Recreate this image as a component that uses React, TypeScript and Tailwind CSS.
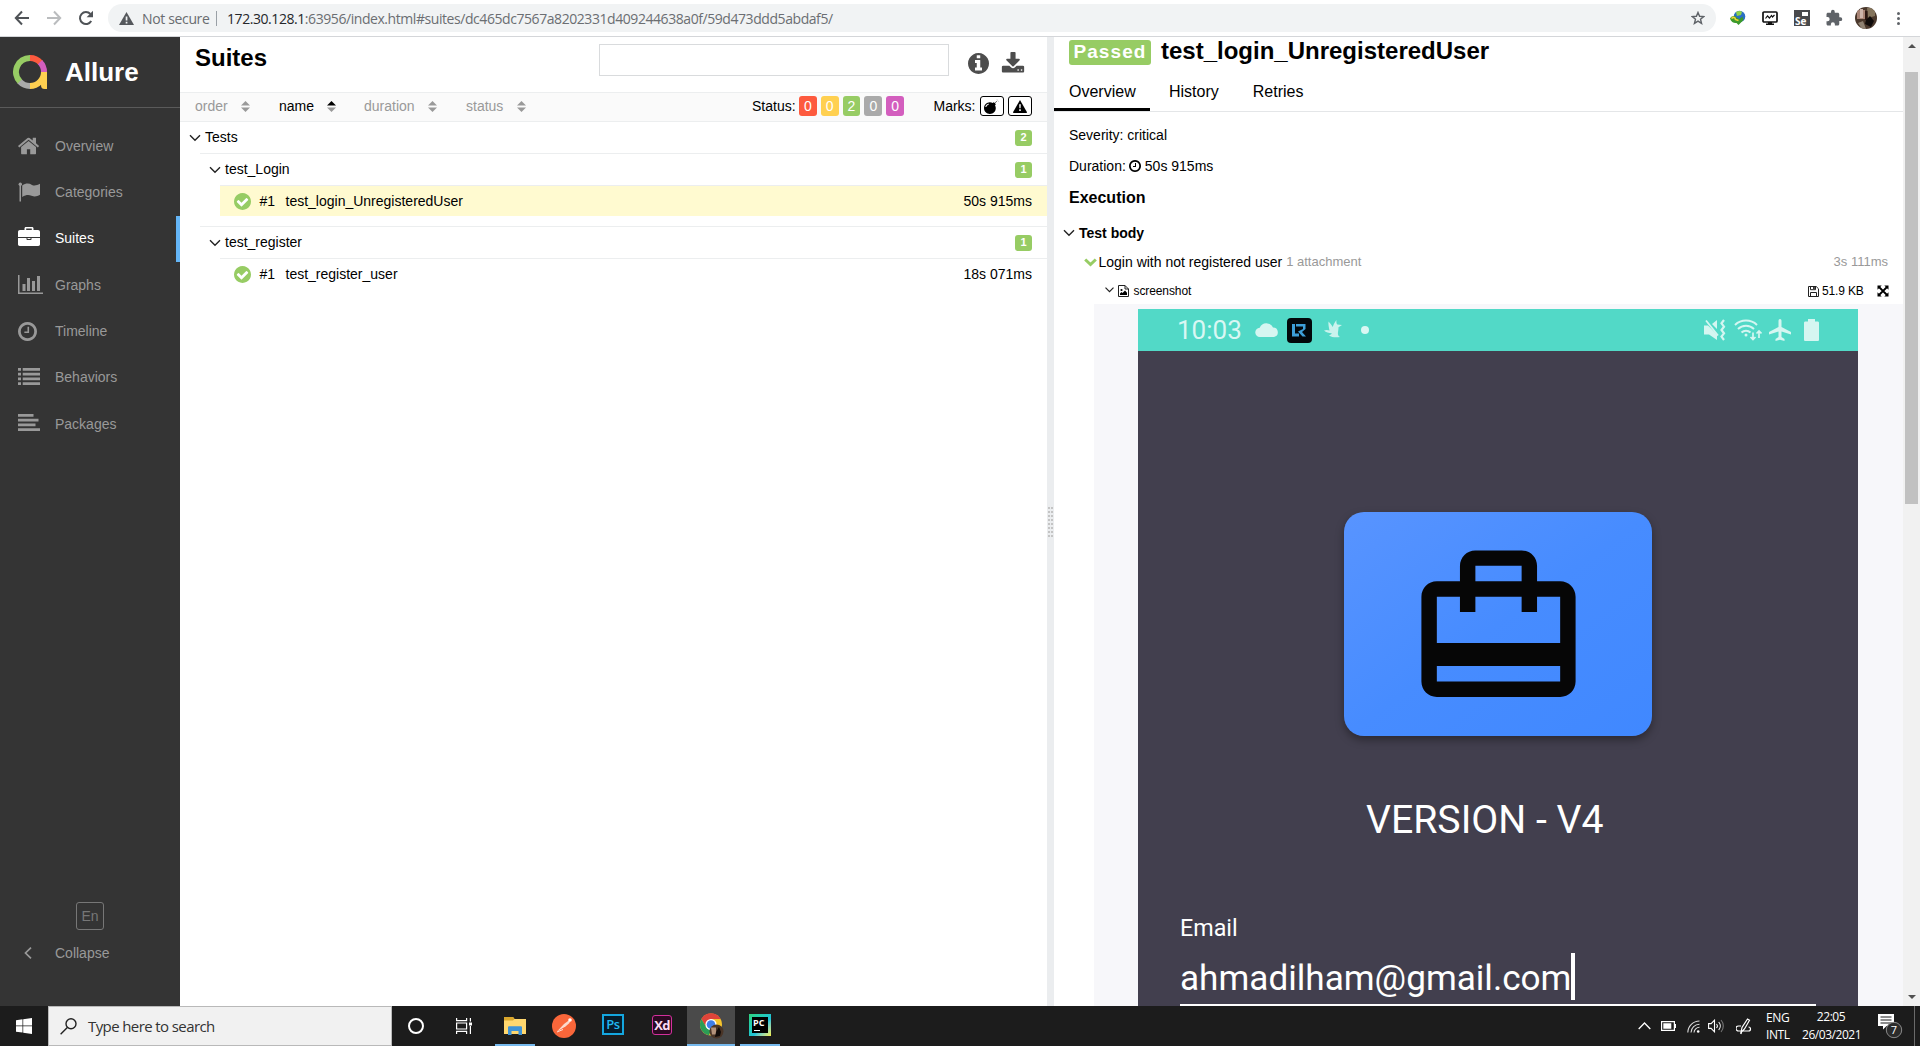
import type { ReactNode } from "react";

const RING =
  "M1664 896q0 209-103 385.5t-279.5 279.5-385.5 103-385.5-103-279.5-279.5-103-385.5 103-385.5 279.5-279.5 385.5-103 385.5 103 279.5 279.5 103 385.5z";
const HOME =
  "M1472 992v480q0 26-19 45t-45 19h-384v-384h-256v384h-384q-26 0-45-19t-19-45v-480q0-1 .5-3t.5-3l575-474 575 474q1 2 1 6zm223-69l-62 74q-8 9-21 11h-3q-13 0-21-7l-692-577-692 577q-12 8-24 7-13-2-21-11l-62-74q-8-10-7-23.5t11-21.5l719-599q32-26 76-26t76 26l244 204v-195q0-14 9-23t23-9h192q14 0 23 9t9 23v408l219 182q10 8 11 21.5t-7 23.5z";
const CHECK =
  "M1412 734q0-28-18-46l-91-90q-19-19-45-19t-45 19l-408 407-226-226q-19-19-45-19t-45 19l-91 90q-18 18-18 46 0 27 18 45l362 362q19 19 45 19 27 0 46-19l543-543q18-18 18-45z";
const CLOCK =
  "M1024 544v448q0 14-9 23t-23 9h-320q-14 0-23-9t-9-23v-64q0-14 9-23t23-9h224v-352q0-14 9-23t23-9h64q14 0 23 9t9 23zm416 352q0-148-73-273t-198-198-273-73-273 73-198 198-73 273 73 273 198 198 273 73 273-73 198-198 73-273zm224 0q0 209-103 385.5t-279.5 279.5-385.5 103-385.5-103-279.5-279.5-103-385.5 103-385.5 279.5-279.5 385.5-103 385.5 103 279.5 279.5 103 385.5z";
const INFO =
  "M1152 1376v-160q0-14-9-23t-23-9h-96v-512q0-14-9-23t-23-9h-320q-14 0-23 9t-9 23v160q0 14 9 23t23 9h96v320h-96q-14 0-23 9t-9 23v160q0 14 9 23t23 9h448q14 0 23-9t9-23zm-128-896v-160q0-14-9-23t-23-9h-192q-14 0-23 9t-9 23v160q0 14 9 23t23 9h192q14 0 23-9t9-23zm640 416q0 209-103 385.5t-279.5 279.5-385.5 103-385.5-103-279.5-279.5-103-385.5 103-385.5 279.5-279.5 385.5-103 385.5 103 279.5 279.5 103 385.5z";
const DOWNLOAD =
  "M1344 1344q0-26-19-45t-45-19-45 19-19 45 19 45 45 19 45-19 19-45zm256 0q0-26-19-45t-45-19-45 19-19 45 19 45 45 19 45-19 19-45zm128-224v320q0 40-28 68t-68 28h-1472q-40 0-68-28t-28-68v-320q0-40 28-68t68-28h465l135 136q58 56 136 56t136-56l136-136h464q40 0 68 28t28 68zm-325-569q17 41-14 70l-448 448q-18 19-45 19t-45-19l-448-448q-31-29-14-70 17-39 59-39h256v-448q0-26 19-45t45-19h256q26 0 45 19t19 45v448h256q42 0 59 39z";
const BOMB =
  "M571 589q-10-25-34-35t-49 0q-108 44-191 127t-127 191q-10 25 0 49t35 34q13 5 24 5 42 0 60-40 34-84 98.5-148.5t148.5-98.5q25-11 35-35t0-49zm942-356l46 46-244 243 68 68q19 19 19 45.5t-19 45.5l-64 64q89 161 89 343 0 143-55.5 273.5t-150 225-225 150-273.5 55.5-273.5-55.5-225-150-150-225-55.5-273.5 55.5-273.5 150-225 225-150 273.5-55.5q182 0 343 89l64-64q19-19 45.5-19t45.5 19l68 68z";
const CARD_TRAVEL =
  "M20 6h-3V4c0-1.11-.89-2-2-2H9c-1.11 0-2 .89-2 2v2H4c-1.11 0-2 .89-2 2v11c0 1.11.89 2 2 2h16c1.11 0 2-.89 2-2V8c0-1.11-.89-2-2-2zM9 4h6v2H9V4zm11 15H4v-2h16v2zm0-5H4V8h3v2h2V8h6v2h2V8h3v6z";

/* ---------- shared pieces ---------- */

function Chevron({ className = "" }: { className?: string }) {
  return (
    <svg className={className} width="12" height="8" viewBox="0 0 12 8" fill="none" stroke="#222" strokeWidth="1.4">
      <path d="M1 1.2l5 5 5-5" />
    </svg>
  );
}

/* ---------- browser toolbar ---------- */

function BrowserBar() {
  return (
    <header className="flex h-[37px] shrink-0 items-center border-b border-[#d4d6d9] bg-white">
      <svg className="ml-[14px] shrink-0" width="16" height="16" viewBox="0 0 16 16" fill="none" stroke="#4f5357" strokeWidth="2">
        <path d="M15 8H2M8 1.5L1.8 8 8 14.5" />
      </svg>
      <svg className="ml-[16px] shrink-0" width="16" height="16" viewBox="0 0 16 16" fill="none" stroke="#babcbe" strokeWidth="2">
        <path d="M1 8h13M8 1.5L14.2 8 8 14.5" />
      </svg>
      <svg className="ml-[16px] shrink-0" width="16" height="16" viewBox="0 0 16 16">
        <path d="M13.2 11a6 6 0 1 1-.8-7" fill="none" stroke="#4f5357" strokeWidth="2" />
        <path d="M15 .8v6.4H8.6z" fill="#4f5357" />
      </svg>
      <div className="ml-[14px] flex h-7 w-[1608px] shrink-0 items-center rounded-full bg-[#f1f3f4] font-['Open_Sans',sans-serif] text-[14px]">
        <svg className="ml-[11px] shrink-0" width="15" height="13" viewBox="0 0 15 13">
          <path d="M7.5 0L15 13H0z" fill="#55585c" />
          <path d="M6.7 4.5h1.7v4H6.7zM6.7 9.7h1.7v1.7H6.7z" fill="#f1f3f4" />
        </svg>
        <span className="ml-[8px] w-[74px] whitespace-nowrap tracking-[-0.35px] text-[#696c70]">Not secure</span>
        <span className="h-[15px] w-px bg-[#9aa0a6]" />
        <span className="ml-[10px] grow whitespace-nowrap tracking-[-0.435px] text-[#6b6e72]">
          <span className="text-[#25272a]">172.30.128.1</span>
          :63956/index.html#suites/dc465dc7567a8202331d409244638a0f/59d473ddd5abdaf5/
        </span>
        <svg className="mr-[11px]" width="14" height="14" viewBox="0 0 24 24" fill="none" stroke="#5f6368" strokeWidth="2.4">
          <path d="M12 2.5l2.7 6.6 7.1.5-5.5 4.6 1.8 7L12 17.3l-6.1 3.9 1.8-7L2.200 9.600l7.100-.5z" />
        </svg>
      </div>
      <svg className="ml-[14px] shrink-0" width="16" height="16" viewBox="0 0 16 16">
        <circle cx="9.500" cy="6.500" r="5.800" fill="#2a6fc4" />
        <path d="M6 2c2-1.500 5-1.500 6 0l-1 3-4 1z" fill="#8fd14a" />
        <path d="M0 8.500c2-3 5-3 6.500-1l3 1.500 3-2.500 1 3.500-5 5-2-2C4 13.500 1 12 0 8.500z" fill="#3d9a2b" />
        <path d="M1.500 8.500c2-2 4-1 4 1l3 1" stroke="#f1d33a" strokeWidth="1.600" fill="none" />
      </svg>
      <svg className="ml-[16px] shrink-0" width="16" height="16" viewBox="0 0 16 16">
        <rect x="1" y="2" width="14" height="10" rx="1" fill="#fff" stroke="#111" strokeWidth="1.700" />
        <path d="M3.500 8.500l2-2.500 2 2 2-2.500 1 1.500 2-2" fill="none" stroke="#111" strokeWidth="1.200" />
        <path d="M6 12h4v1.500h2v1.500H4v-1.500h2z" fill="#111" />
      </svg>
      <div className="relative ml-[16px] h-4 w-4 shrink-0 bg-[#48494c]">
        <span className="absolute top-[5px] left-[1px] font-['Open_Sans',sans-serif] text-[10px] leading-[12px] font-bold text-white">Se</span>
        <span className="absolute top-[2px] right-[2px] h-[4px] w-[6px] bg-white" />
      </div>
      <svg className="ml-[15px] shrink-0" width="18" height="18" viewBox="0 0 24 24" fill="#5f6368">
        <path d="M20.500 11H19V7c0-1.100-.9-2-2-2h-4V3.500a2.500 2.500 0 0 0-5 0V5H4c-1.100 0-2 .9-2 2v3.800h1.500a2.700 2.700 0 0 1 0 5.400H2V20c0 1.100.9 2 2 2h3.800v-1.500a2.700 2.700 0 0 1 5.400 0V22H17c1.100 0 2-.9 2-2v-4h1.500a2.500 2.500 0 0 0 0-5z" />
      </svg>
      <svg className="ml-[12px] shrink-0" width="22" height="22" viewBox="0 0 22 22">
        <defs>
          <clipPath id="avatar">
            <circle cx="11" cy="11" r="11" />
          </clipPath>
        </defs>
        <g clipPath="url(#avatar)">
          <rect width="22" height="22" fill="#4a382c" />
          <path d="M2 3h8v9H2z" fill="#a88476" />
          <path d="M5 2h3v9H5z" fill="#cdb5ab" />
          <path d="M12 1h8v8l-7 2z" fill="#84745c" />
          <path d="M10 4h2.500v9H10z" fill="#2b1712" />
          <path d="M3 16l5-2 3 8H7z" fill="#8f8272" />
          <path d="M11 13l4-4 4 5-3 6-6-3z" fill="#0f0b0a" />
        </g>
      </svg>
      <div className="ml-[20px] flex flex-col gap-[2px]">
        <span className="h-[3px] w-[3px] rounded-full bg-[#5f6368]" />
        <span className="h-[3px] w-[3px] rounded-full bg-[#5f6368]" />
        <span className="h-[3px] w-[3px] rounded-full bg-[#5f6368]" />
      </div>
    </header>
  );
}

/* ---------- Allure sidebar ---------- */

const NAV: { label: string; active?: boolean; icon: ReactNode }[] = [
  {
    label: "Overview",
    icon: (
      <svg width="22" height="22" viewBox="80 50 1700 1700" fill="currentColor">
        <path d={HOME} />
      </svg>
    ),
  },
  {
    label: "Categories",
    icon: (
      <svg width="24" height="20" viewBox="0 0 24 20" fill="currentColor">
        <circle cx="2.300" cy="2.200" r="1.700" />
        <path d="M1.500 3h1.500v16.500H1.500zM4.200 3.400C8 1 11 1.200 14 2.900c2.500 1.200 5 .3 8-1.100v11c-3 1.800-5.500 2.300-8.500 1-3-1.200-5.500-1-9.300 1.200z" />
      </svg>
    ),
  },
  {
    label: "Suites",
    active: true,
    icon: (
      <svg className="-mt-1" width="22" height="20" viewBox="0 0 22 20" fill="currentColor">
        <path
          fillRule="evenodd"
          d="M6.500 3V1.500C6.500.6 7 0 8 0h6c1 0 1.500.6 1.500 1.500V3H20c1.200 0 2 .8 2 2v5H0V5c0-1.200.8-2 2-2zM8.200 1.500V3h5.600V1.500zM0 11h8.500v1.300c0 .5.300.7.700.7h3.600c.4 0 .7-.2.7-.7V11H22v6.300c0 1-.8 1.700-1.700 1.700H1.700C.8 19 0 18.300 0 17.300z"
        />
        <path d="M9.500 11h3v1h-3z" />
      </svg>
    ),
  },
  {
    label: "Graphs",
    icon: (
      <svg className="-mt-0.5" width="25" height="19" viewBox="0 0 25 19" fill="currentColor">
        <path d="M0 0h1.500v17.500H25V19H0zM4.500 9h3v7h-3zM9 3h3v13H9zM14 6h3v10h-3zM19 1h3v15h-3z" />
      </svg>
    ),
  },
  {
    label: "Timeline",
    icon: (
      <svg width="19" height="19" viewBox="128 128 1536 1536" fill="currentColor">
        <path d={CLOCK} />
      </svg>
    ),
  },
  {
    label: "Behaviors",
    icon: (
      <svg className="-mt-0.5" width="22" height="17" viewBox="0 0 22 17" fill="currentColor">
        <path d="M0 0h3v2.700H0zM0 4.700h3v2.700H0zM0 9.500h3v2.700H0zM0 14.200h3V17H0zM4.700 0H22v2.700H4.700zM4.700 4.700H22v2.700H4.700zM4.700 9.500H22v2.700H4.700zM4.700 14.200H22V17H4.700z" />
      </svg>
    ),
  },
  {
    label: "Packages",
    icon: (
      <svg className="-mt-[3px]" width="22" height="17" viewBox="0 0 22 17" fill="currentColor">
        <path d="M0 0h15.500v2.700H0zM0 4.700h20.500v2.700H0zM0 9.500h17.500v2.700H0zM0 14.200h22V17H0z" />
      </svg>
    ),
  },
];

function Sidebar() {
  return (
    <aside className="flex w-[180px] shrink-0 flex-col bg-[#343434] text-[14px] text-[#999]">
      <div className="flex h-[71px] shrink-0 items-center border-b border-[#5a5a5a] pl-[13px]">
        <svg width="35" height="35" viewBox="0 0 35 35" fill="none" strokeWidth="6">
          <path d="M7.100 26.900A14 14 0 0 1 17 3" stroke="#97cc64" />
          <path d="M17 3a14 14 0 0 1 10.500 4.700" stroke="#fd5a3e" />
          <path d="M27 7.200a14 14 0 0 1 4 9.800" stroke="#d35ebe" />
          <path d="M17 31a14 14 0 0 1-10.300-4.500" stroke="#aaa" />
          <path d="M17 31a14 14 0 0 0 14-14" stroke="#ffd050" />
          <path d="M28 17h6v17h-2.500c-2.500 0-3.500-1.500-3.500-4z" fill="#ffd050" />
        </svg>
        <span className="ml-[17px] text-[26px] leading-[30px] font-bold text-white">Allure</span>
      </div>
      <nav className="mt-[15px] flex flex-col">
        {NAV.map((n) => (
          <div
            key={n.label}
            className={
              n.active
                ? "flex h-[46.33px] items-center border-r-4 border-[#64b5f6] pl-[18px] text-white"
                : "flex h-[46.33px] items-center pl-[18px]"
            }
          >
            <span className="flex w-[37px] shrink-0 items-center">{n.icon}</span>
            {n.label}
          </div>
        ))}
      </nav>
      <div className="mt-auto mb-[8px] ml-[76px] flex h-7 w-7 items-center justify-center rounded-[3px] border border-[#777] text-[#777]">
        En
      </div>
      <div className="mb-[38px] flex h-[30px] items-center pl-6">
        <svg width="8" height="12" viewBox="0 0 8 12" fill="none" stroke="#999" strokeWidth="1.700">
          <path d="M7 .7L1.500 6 7 11.300" />
        </svg>
        <span className="ml-[23px]">Collapse</span>
      </div>
    </aside>
  );
}

/* ---------- suites tree ---------- */

function Sorter({ label, active, className }: { label: string; active?: boolean; className: string }) {
  return (
    <div className={className}>
      <span className={active ? "text-black" : "text-[#999]"}>{label}</span>
      <svg width="9" height="11" viewBox="0 0 9 11">
        <path d="M0 4.500L4.500 0 9 4.500z" fill={active ? "#000" : "#999"} />
        <path d="M0 6.500h9L4.500 11z" fill="#999" />
      </svg>
    </div>
  );
}

function Count({ n }: { n: number }) {
  return (
    <span className="mr-[15px] ml-auto flex h-4 w-[17px] items-center justify-center rounded-[3px] bg-[#97cc64] text-[11px] font-bold text-white">
      {n}
    </span>
  );
}

function Leaf({ name, time, selected }: { name: string; time: string; selected?: boolean }) {
  return (
    <div
      className={
        selected
          ? "ml-10 flex h-[30px] items-center bg-[#fffad0] pl-[13.500px]"
          : "ml-10 flex h-[30px] items-center pl-[13.500px]"
      }
    >
      <svg width="17" height="17" viewBox="128 128 1536 1536">
        <path d={RING} fill="#97cc64" />
        <path d={CHECK} fill="#fff" />
      </svg>
      <span className="ml-[9px] w-[26px]">#1</span>
      <span>{name}</span>
      <span className="mr-[15px] ml-auto">{time}</span>
    </div>
  );
}

function Suites() {
  const statuses = ["bg-[#fd5a3e]", "bg-[#ffd050]", "bg-[#97cc64]", "bg-[#aaa]", "bg-[#d35ebe]"];
  return (
    <section className="flex w-[867px] shrink-0 flex-col bg-white text-[14px]">
      <div className="flex h-[55px] shrink-0 pl-[15px]">
        <h2 className="mt-[6px] w-[404px] text-[24px] leading-[30px] font-bold">Suites</h2>
        <div className="mt-[7px] h-8 w-[350px] border border-[#d9dbdd]" />
        <svg className="mt-[16px] ml-[19px]" width="21" height="21" viewBox="128 128 1536 1536" fill="#4d4d4d">
          <path d={INFO} />
        </svg>
        <svg className="mt-[15px] ml-[12px]" width="24" height="24" viewBox="0 0 1792 1792" fill="#4d4d4d">
          <path d={DOWNLOAD} />
        </svg>
      </div>
      <div className="flex h-[30px] shrink-0 items-center border-y border-[#eceeef] bg-[#fafafa] pb-[2px] pl-[15px]">
        <Sorter label="order" className="flex w-[55px] items-center justify-between" />
        <Sorter label="name" active className="ml-[29px] flex w-[57px] items-center justify-between" />
        <Sorter label="duration" className="ml-[28px] flex w-[73px] items-center justify-between" />
        <Sorter label="status" className="ml-[29px] flex w-[60px] items-center justify-between" />
        <span className="ml-[226px] w-[47px]">Status:</span>
        <div className="flex gap-[4px]">
          {statuses.map((s, i) => (
            <span key={s} className={"flex h-5 w-[17.800px] items-center justify-center rounded-[3px] text-white " + s}>
              {i === 2 ? 2 : 0}
            </span>
          ))}
        </div>
        <span className="ml-[29.500px] w-[46.500px]">Marks:</span>
        <span className="flex h-5 w-6 items-center justify-center rounded-[3px] border border-black bg-white">
          <svg width="15" height="15" viewBox="0 0 1792 1792">
            <path d={BOMB} />
            <path d="M1560 130l60 60M1700 280h80M1560 20v60" fill="none" stroke="#888" strokeWidth="70" />
          </svg>
        </span>
        <span className="ml-1 flex h-5 w-6 items-center justify-center rounded-[3px] border border-black bg-white">
          <svg width="14" height="13" viewBox="0 0 14 13">
            <path d="M7 0l7 12.300q0 .7-.7.700H.7q-.7 0-.7-.7z" />
            <path d="M6.200 4.300h1.600l-.2 4H6.400zM6.200 9.300h1.600v1.600H6.200z" fill="#fff" />
          </svg>
        </span>
      </div>
      <div className="flex h-[31px] items-center pl-[9px]">
        <Chevron />
        <span className="ml-[4px]">Tests</span>
        <Count n={2} />
      </div>
      <div className="ml-5 flex h-8 items-center border-t border-[#eceeef] pl-[9px]">
        <Chevron />
        <span className="ml-[4px]">test_Login</span>
        <Count n={1} />
      </div>
      <div className="ml-10 h-px bg-[#eceeef]" />
      <Leaf name="test_login_UnregisteredUser" time="50s 915ms" selected />
      <div className="mt-[10px] ml-5 flex h-8 items-center border-t border-[#eceeef] pl-[9px]">
        <Chevron />
        <span className="ml-[4px]">test_register</span>
        <Count n={1} />
      </div>
      <div className="ml-10 h-px bg-[#eceeef]" />
      <Leaf name="test_register_user" time="18s 071ms" />
    </section>
  );
}

function Gutter() {
  return (
    <div className="flex w-[7px] shrink-0 flex-col items-center bg-[#ebedef] pt-[470px]">
      <div className="grid grid-cols-2 gap-x-[1px] gap-y-[2px]">
        {Array.from({ length: 16 }, (_, i) => (
          <span key={i} className="h-[2px] w-[2px] bg-[#c4c4c4]" />
        ))}
      </div>
    </div>
  );
}

/* ---------- attached phone screenshot ---------- */

function PhoneStatusBar() {
  return (
    <div className="flex h-[42px] shrink-0 items-center bg-[#52d9c7] pl-[39px]">
      <span className="w-[78px] text-[26px] leading-[30px] text-[#d9f7f3]">10:03</span>
      <svg width="24" height="14" viewBox="0 0 24 14" fill="#d5f6f1">
        <path d="M5 14a4.600 4.600 0 0 1-.3-9.200A7.300 7.300 0 0 1 18 4.500 4.800 4.800 0 0 1 19 14z" />
      </svg>
      <svg className="ml-2" width="25" height="25" viewBox="0 0 25 25">
        <rect width="25" height="25" rx="4" fill="#02080b" />
        <path d="M5 6h3v9.500h4V18.500H5z" fill="#3d9fd8" />
        <path d="M9 6h9.500v5l-3.500 3 4 4.500h-3.500L11 13.500l5-2.500V8.500H9z" fill="#3d9fd8" />
      </svg>
      <svg className="-mt-[3px] ml-[12px]" width="18" height="18" viewBox="0 0 18 18" fill="#c9f3ed">
        <path d="M0 10.500c2-.8 4-.6 5.500 0C5 8 4 4 4.500 1.500 6 3 7.500 4.800 8.800 7 9.500 4.500 11 1.500 12.500 0c-.3 2 0 3.500.8 4.500L18 5l-3.500 2.200C14.500 12 12.500 15 16 17c-4 .8-8.500.3-11-1.500 1.500-.5 2.300-1.200 2.800-2.200C4.500 13.200 2 12.300 0 10.500z" />
      </svg>
      <span className="ml-[19px] h-2 w-2 rounded-full bg-[#d9f7f3]" />
      <svg className="ml-auto" width="22" height="22" viewBox="0 0 22 22">
        <path d="M0 6.500h4l9 9V21l-8-5.500H0zM8 5l5-4v9z" fill="#d5f6f1" />
        <path d="M2 1.500l12 15" stroke="#d5f6f1" strokeWidth="1.800" />
        <path d="M20 1l-2.500 3.300L20 7.700l-2.500 3.300 2.500 3.300-2.500 3.300L20 21" fill="none" stroke="#d5f6f1" strokeWidth="2.200" />
      </svg>
      <svg className="ml-[8px]" width="28" height="22" viewBox="0 0 28 22" fill="none" stroke="#d5f6f1" strokeWidth="2">
        <path d="M1 6a16 16 0 0 1 22 0M4 10a11.500 11.500 0 0 1 16 0M7.500 13.500a6.500 6.500 0 0 1 9 0" />
        <circle cx="12" cy="16" r="1.500" fill="#d5f6f1" stroke="none" />
        <path d="M19 13.500v7M16.500 18l2.500 2.500 2.500-2.500M25 19v-7M22.500 14.500L25 12l2.500 2.500" strokeWidth="1.700" />
      </svg>
      <svg className="ml-[7px]" width="22" height="22" viewBox="0 0 22 22" fill="#d5f6f1">
        <path d="M11 0c1 0 1.500.8 1.500 2v6l9.500 5v2.500l-9.500-3v5.500l3 2V22L11 20.700 6.500 22v-2l3-2v-5.500L0 15.500V13l9.500-5V2c0-1.200.5-2 1.500-2z" />
      </svg>
      <svg className="mr-[39px] ml-[13px]" width="15" height="22" viewBox="0 0 15 22" fill="#d5f6f1">
        <path d="M4 0h7v2.500h2.500c1 0 1.500.5 1.500 1.500v16.500c0 1-.5 1.500-1.500 1.500h-12C.5 22 0 21.500 0 20.500V4c0-1 .5-1.500 1.500-1.500H4z" />
      </svg>
    </div>
  );
}

function Phone() {
  return (
    <div className="ml-[44px] flex h-[697px] w-[720px] flex-col bg-[#423f4e] font-['Roboto',sans-serif] text-white">
      <PhoneStatusBar />
      <div className="mt-[161px] ml-[206px] h-[224px] w-[308px] shrink-0 rounded-[20px] bg-linear-to-br from-[#5894ff] via-[#478cff] to-[#4088ff] pt-[23px] pl-[61.500px] shadow-[0_4px_8px_rgba(0,0,0,0.35)]">
        <svg width="185" height="185" viewBox="0 0 24 24" fill="#060606">
          <path d={CARD_TRAVEL} />
        </svg>
      </div>
      <div className="mt-[59px] ml-[228px] h-[50px] text-[39.200px] leading-[50px] whitespace-nowrap">VERSION - V4</div>
      <div className="mt-[68px] ml-[42px] h-[30px] text-[23.300px] leading-[30px]">Email</div>
      <div className="mt-[10px] ml-[42px] flex h-[47px] items-center">
        <span className="w-[391px] pt-[3px] text-[35.150px] leading-[44px] whitespace-nowrap">ahmadilham@gmail.com</span>
        <span className="h-[47px] w-[4px] bg-white" />
      </div>
      <div className="mt-[4px] ml-[42px] h-[2px] w-[636px] bg-white" />
    </div>
  );
}

/* ---------- test result panel ---------- */

function Result() {
  return (
    <section className="flex min-w-0 grow flex-col overflow-hidden bg-white text-[14px]">
      <div className="mt-[3px] flex h-[25px] shrink-0 pl-[15px]">
        <span className="flex h-[25px] w-[82px] items-center justify-center rounded-[3px] bg-[#97cc64] text-[19px] font-bold tracking-[1.100px] text-white">
          Passed
        </span>
        <span className="ml-[10px] text-[24px] leading-[21px] font-bold whitespace-nowrap">test_login_UnregisteredUser</span>
      </div>
      <div className="flex h-[47px] shrink-0 border-b border-[#e4e6e8] text-[16px]">
        <span className="flex h-[46px] w-[96px] items-center border-b-[3px] border-black pt-[10px] pl-[15px]">Overview</span>
        <span className="ml-[19px] flex items-center pt-[7px]">History</span>
        <span className="ml-[34px] flex items-center pt-[7px]">Retries</span>
      </div>
      <div className="mt-[11px] h-[24px] shrink-0 pl-[15px] leading-[24px]">Severity: critical</div>
      <div className="mt-[7px] flex h-6 shrink-0 items-center pl-[15px]">
        Duration:
        <svg className="mr-[4px] ml-[3px]" width="12" height="12" viewBox="128 128 1536 1536">
          <path d={CLOCK} />
        </svg>
        50s 915ms
      </div>
      <h3 className="mt-[8px] h-6 shrink-0 pl-[15px] text-[16px] leading-6 font-bold">Execution</h3>
      <div className="mt-[11px] flex h-6 shrink-0 items-center pl-[9px]">
        <Chevron />
        <span className="ml-[4px] font-bold">Test body</span>
      </div>
      <div className="mt-[5px] flex h-6 shrink-0 items-center pr-[15px] pl-[30px]">
        <svg width="13" height="9" viewBox="0 0 13 9" fill="none" stroke="#97cc64" strokeWidth="3">
          <path d="M1.200 1.500l5.300 5 5.300-5" />
        </svg>
        <span className="ml-[1.500px]">Login with not registered user</span>
        <span className="ml-[4px] text-[13px] text-[#999]">1 attachment</span>
        <span className="ml-auto text-[13px] text-[#999]">3s 111ms</span>
      </div>
      <div className="mt-[5px] flex h-6 shrink-0 items-center pr-[14px] pl-[51px] text-[12px]">
        <svg className="-mt-[3px]" width="9" height="6" viewBox="0 0 9 6" fill="none" stroke="#222" strokeWidth="1.200">
          <path d="M.5.7l4 4 4-4" />
        </svg>
        <svg className="ml-[4px]" width="11" height="12" viewBox="0 0 11 12">
          <path d="M.5.5h6.500l3.500 3.500v7.500H.5zM7 .5V4h3.500" fill="none" stroke="#222" />
          <circle cx="3.500" cy="5" r="1.100" />
          <path d="M2 10V8.500l1.500-1.500 1 1 2.500-2.500 2 2.200V10z" />
        </svg>
        <span className="ml-[4.500px] tracking-[-0.100px]">screenshot</span>
        <svg className="ml-auto" width="11" height="11" viewBox="0 0 11 11">
          <path d="M.5.5h7.700l2.300 2.300v7.700H.5zM2.500.5v3.200h5V.5M2.500 10.500V6.500h6v4" fill="none" stroke="#222" />
          <path d="M5.200 1h1.500v2H5.200z" />
        </svg>
        <span className="ml-[3px] w-[55px] tracking-[-0.150px]">51.9 KB</span>
        <svg width="12" height="12" viewBox="0 0 12 12">
          <path d="M2 2l8 8M10 2l-8 8" stroke="#000" strokeWidth="1.800" />
          <path d="M.5.5h4.200L.5 4.700zM11.500.5v4.200L7.300.5zM.5 11.500V7.300l4.200 4.200zM11.500 11.500H7.300l4.200-4.200z" />
        </svg>
      </div>
      <div className="mt-[1px] ml-[40px] grow bg-[#f7f7fa] pt-[5px]">
        <Phone />
      </div>
    </section>
  );
}

function Scrollbar() {
  return (
    <div className="flex w-[17px] shrink-0 flex-col items-center bg-[#f1f1f1]">
      <svg className="mt-[7px]" width="8" height="4" viewBox="0 0 8 4">
        <path d="M0 4l4-4 4 4z" fill="#505050" />
      </svg>
      <div className="mt-[24px] h-[432px] w-[13px] bg-[#c1c1c1]" />
      <svg className="mt-auto mb-[7px]" width="8" height="4" viewBox="0 0 8 4">
        <path d="M0 0l4 4 4-4z" fill="#505050" />
      </svg>
    </div>
  );
}

/* ---------- Windows taskbar ---------- */

function Task({ children, className }: { children: ReactNode; className: string }) {
  return <div className={"flex h-10 shrink-0 items-center justify-center " + className}>{children}</div>;
}

function Taskbar() {
  return (
    <footer className="flex h-10 shrink-0 items-center bg-[#1c1c1c] font-['Open_Sans',sans-serif] text-white">
      <svg className="mx-4 shrink-0" width="16" height="16" viewBox="0 0 16 16" fill="#fff">
        <path d="M0 2.200l6.500-.9v6.200H0zM7.200 1.200L16 0v7.500H7.200zM0 8.300h6.500v6.300L0 13.700zM7.200 8.300H16V16l-8.800-1.300z" />
      </svg>
      <div className="flex h-10 w-[344px] shrink-0 items-center border border-[#b9b9b9] bg-[#f1f1f1] pl-[11px] text-[15px] text-[#333]">
        <svg width="17" height="17" viewBox="0 0 17 17" fill="none" stroke="#222" strokeWidth="1.400">
          <circle cx="11" cy="5.800" r="5" />
          <path d="M7.300 9.500L.6 16.200" />
        </svg>
        <span className="ml-[11px] whitespace-nowrap tracking-[-0.600px]">Type here to search</span>
      </div>
      <Task className="w-12">
        <span className="h-4 w-4 rounded-full border-[2.500px] border-white" />
      </Task>
      <Task className="w-12">
        <svg width="16" height="16" viewBox="0 0 16 16" fill="none" stroke="#fff" strokeWidth="1.200">
          <path d="M.6 0v2.600h10V0M.6 16v-2.600h10V16M.6 5h10v6H.6zM14.400 0v3.500M14.400 8v8" />
          <path d="M13 4.500h3v3h-3z" fill="#fff" stroke="none" />
        </svg>
      </Task>
      <Task className="ml-[7px] w-10 border-b-2 border-[#76b9ed]">
        <svg width="22" height="19" viewBox="0 0 22 19">
          <path d="M0 1h9l1.500 2H22v15H0z" fill="#ffd76e" />
          <path d="M0 1h9l1.500 2-1.500 1.500H0z" fill="#d9a62c" />
          <path d="M4 11.500c0-.8.500-1.300 1.300-1.300h11.400c.8 0 1.300.5 1.300 1.300V19h-3.500v-4h-7v4H4z" fill="#3f93d6" />
        </svg>
      </Task>
      <Task className="ml-[17px] w-6">
        <svg width="24" height="24" viewBox="0 0 24 24">
          <circle cx="12" cy="12" r="12" fill="#f9663a" />
          <path d="M5 17.500l7-7.500 4-3 2-.500-.5 2.500-4 3.500z" fill="#fbd9cc" />
          <circle cx="18" cy="6" r="1.800" fill="#fff" />
          <path d="M5 18l6-2.500" stroke="#fff" strokeWidth=".8" />
        </svg>
      </Task>
      <Task className="ml-[26px] w-[22px] pb-[3px]">
        <span className="flex h-[21px] w-[22px] items-center justify-center border-2 border-[#14a7e0] bg-[#071d2b] text-[13px] leading-[17px] font-semibold tracking-[-0.500px] text-[#22b8f0]">
          Ps
        </span>
      </Task>
      <Task className="ml-[28px] w-5 pb-[3px]">
        <span className="flex h-5 w-5 items-center justify-center rounded-[3px] border border-[#d4309c] bg-[#2c0a22] text-[13px] leading-[16px] font-bold tracking-[-0.800px] text-[#fbdcf3]">
          Xd
        </span>
      </Task>
      <Task className="ml-[15px] w-12 border-b-2 border-[#76b9ed] bg-[#4a4a4a]">
        <svg className="mt-[2px]" width="25" height="26" viewBox="0 0 25 26">
          <circle cx="12" cy="11.500" r="11" fill="#f6c42c" />
          <path d="M2.400 6A11 11 0 0 1 21.600 6H12l-5 8z" fill="#e0443a" />
          <path d="M2.400 6L7.300 14.300l4.700 2.700-2 5.300A11 11 0 0 1 2.400 6z" fill="#2b9d56" />
          <circle cx="12" cy="11.500" r="5.600" fill="#fff" />
          <circle cx="12" cy="11.500" r="4.300" fill="#3f7fe8" />
          <circle cx="17.500" cy="18.500" r="7" fill="#4a3527" />
          <path d="M12 14.500h5v7h-4z" fill="#b3927b" />
          <path d="M17 19l3-5 2 5-1 4-5 1z" fill="#120c0a" />
        </svg>
      </Task>
      <Task className="ml-[5px] w-10 border-b-2 border-[#76b9ed]">
        <div className="flex h-[22px] w-[22px] items-center justify-center bg-linear-to-br from-[#2fd37c] via-[#22c3d8] via-60% to-[#f6ee3c]">
          <div className="flex h-[16px] w-[16px] flex-col bg-black pt-px pl-px">
            <span className="text-[9px] leading-[9px] font-bold">PC</span>
            <span className="mt-[3px] ml-px h-px w-[6px] bg-white" />
          </div>
        </div>
      </Task>
      <svg className="ml-auto shrink-0" width="13" height="8" viewBox="0 0 13 8" fill="none" stroke="#fff" strokeWidth="1.300">
        <path d="M.7 7l5.800-6 5.800 6" />
      </svg>
      <svg className="ml-[10px] shrink-0" width="15" height="10" viewBox="0 0 15 10">
        <path d="M.6.6h12.800v8.800H.6z" fill="none" stroke="#fff" strokeWidth="1.200" />
        <path d="M2.300 2.300h8v5.400h-8zM13.500 3H15v4h-1.500z" fill="#fff" />
      </svg>
      <svg className="ml-[11px] shrink-0" width="13" height="13" viewBox="0 0 13 13" fill="none" stroke="#ddd" strokeWidth="1.100">
        <path d="M.8 12.500A11.800 11.800 0 0 1 12.500 1M4 12.500A8.600 8.600 0 0 1 12.500 4.200M7 12.500A5.500 5.500 0 0 1 12.500 7.300" />
        <circle cx="11.200" cy="11.500" r="1.300" fill="#fff" stroke="none" />
      </svg>
      <svg className="ml-[8px] shrink-0" width="16" height="14" viewBox="0 0 16 14" fill="none" stroke="#fff" strokeWidth="1.100">
        <path d="M.6 4.600h2.500L6.500 1.200v11.600L3.100 9.400H.6zM8.500 5a3 3 0 0 1 0 4M10.700 3a6 6 0 0 1 0 8" />
        <path d="M13 1a9 9 0 0 1 0 12" stroke="#777" />
      </svg>
      <svg className="ml-[12px] shrink-0" width="16" height="17" viewBox="0 0 16 17" fill="none" stroke="#fff" strokeWidth="1.200">
        <path d="M5 8H2.500a2.500 2.500 0 0 0 0 5h10a2 2 0 0 0 0-4M5 14.500L6 9.500 11.500 1l2 1.300L8.500 11z" />
        <path d="M5 16l1-4" />
      </svg>
      <div className="ml-[14px] w-[36px] text-[12px] leading-[17px] tracking-[-0.400px]">
        <div>ENG</div>
        <div>INTL</div>
      </div>
      <div className="w-[58px] text-center text-[12px] leading-[18px] tracking-[-0.450px] whitespace-nowrap">
        <div>22:05</div>
        <div>26/03/2021</div>
      </div>
      <svg className="ml-[18px] shrink-0" width="26" height="26" viewBox="0 0 26 26">
        <path d="M0 1h16v12H8.500l-3.500 3.500V13H0z" fill="#fff" />
        <path d="M2.500 4h11M2.500 7h11M2.500 10h11" stroke="#1c1c1c" strokeWidth="1.100" />
        <circle cx="16" cy="17" r="7.700" fill="#2b2b2b" stroke="#8a8a8a" />
        <text x="16" y="21" textAnchor="middle" fontSize="11" fill="#fff" fontFamily="Open Sans, sans-serif">7</text>
      </svg>
      <span className="mr-[5px] ml-[10px] h-10 w-px shrink-0 bg-[#6a6a6a]" />
    </footer>
  );
}

export default function App() {
  return (
    <div className="flex h-[1046px] w-[1920px] flex-col overflow-hidden bg-white font-['Liberation_Sans',Arial,sans-serif] text-black">
      <BrowserBar />
      <main className="flex h-[969px] shrink-0">
        <Sidebar />
        <Suites />
        <Gutter />
        <Result />
        <Scrollbar />
      </main>
      <Taskbar />
    </div>
  );
}
